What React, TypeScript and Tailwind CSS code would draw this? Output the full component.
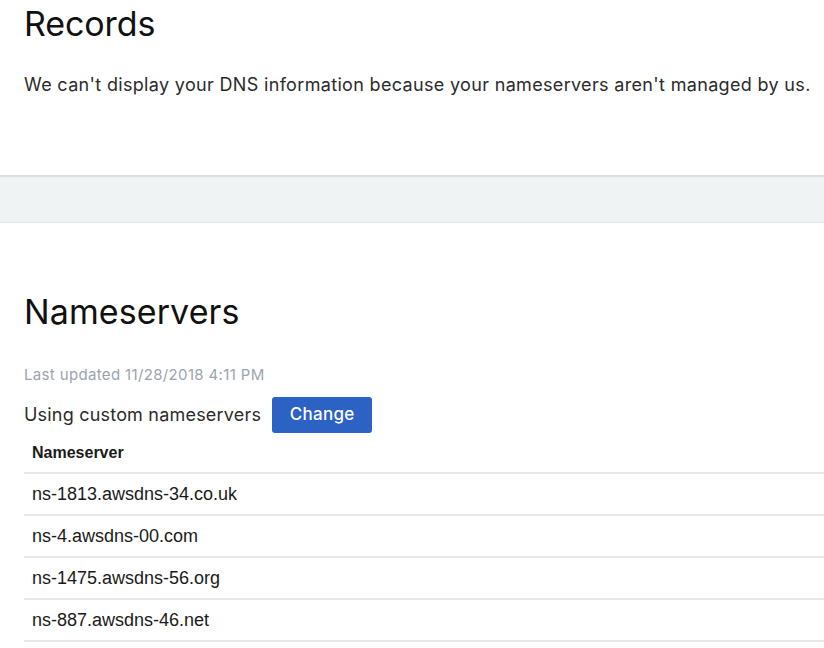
const nameservers = [
  "ns-1813.awsdns-34.co.uk",
  "ns-4.awsdns-00.com",
  "ns-1475.awsdns-56.org",
  "ns-887.awsdns-46.net",
];

export default function App() {
  return (
    <div className="w-[824px] h-[648px] overflow-hidden bg-white font-['Inter',sans-serif] text-[#111]">
      {/* Records */}
      <section className="px-6 pt-[2px] h-[175px]">
        <h1 className="text-[34px] leading-[44px] tracking-[-0.1px]">Records</h1>
        <p className="mt-[27px] text-[18px] leading-[24px] tracking-[0.33px] text-[#2b2b2b] whitespace-nowrap">
          We can't display your DNS information because your nameservers aren't managed by us.
        </p>
      </section>

      {/* gray band */}
      <div className="h-[48px] bg-[#f0f3f4] border-t-2 border-[#dcdfe0] border-b border-b-[#e6e8ea]" />

      {/* Nameservers */}
      <section className="pl-6 pt-[67px]">
        <h2 className="text-[34px] leading-[44px] tracking-[0.1px]">Nameservers</h2>
        <div className="mt-[31px] text-[15px] leading-[20px] tracking-[0.35px] text-[#9ba4ae]">Last updated 11/28/2018 4:11 PM</div>
        <div className="mt-[12px] flex items-center gap-[11px]">
          <span className="text-[18px] leading-[24px] tracking-[0.2px] text-[#2b2b2b]">Using custom nameservers</span>
          <button className="h-[36px] w-[100px] rounded-[3px] bg-[#2b62c4] text-white text-[17px] font-medium tracking-[0.3px]">
            Change
          </button>
        </div>

        <table className="w-full border-collapse font-['Liberation_Sans',Arial,sans-serif] text-[18px] text-[#1a1a1a]">
          <thead>
            <tr className="border-b-2 border-[#e8e8e8]">
              <th className="h-[40px] pl-2 text-left text-[16px] font-bold">Nameserver</th>
            </tr>
          </thead>
          <tbody>
            {nameservers.map((ns) => (
              <tr key={ns} className="border-b-2 border-[#e8e8e8]">
                <td className="h-[42px] pl-2">{ns}</td>
              </tr>
            ))}
          </tbody>
        </table>
      </section>
    </div>
  );
}
